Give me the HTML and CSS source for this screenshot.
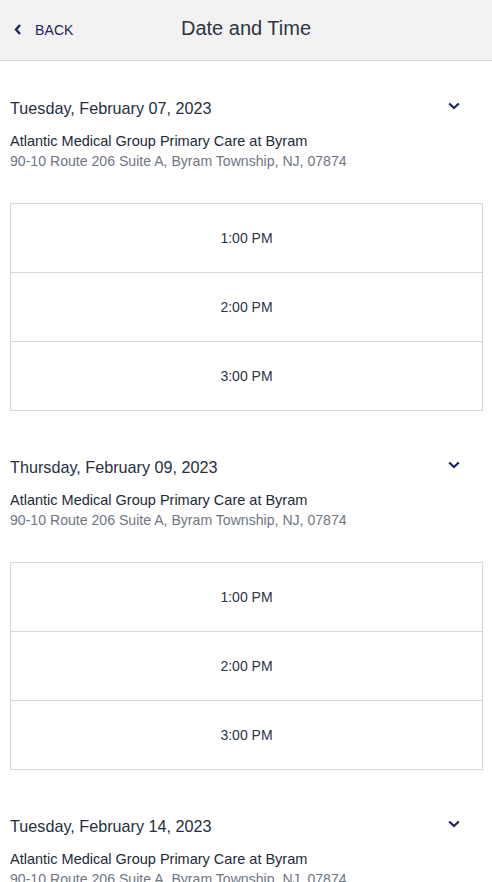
FILE: index.html
```html
<!DOCTYPE html>
<html>
<head>
<meta charset="utf-8">
<link rel="stylesheet" href="styles.css">
</head>
<body>
<header class="topbar">
  <a class="back">
    <svg class="back-icon" width="8" height="11" viewBox="0 0 8 11"><path d="M6 1 L2 5.5 L6 10" fill="none" stroke="#1d2558" stroke-width="2.4"/></svg>
    <span>BACK</span>
  </a>
  <h1 class="title">Date and Time</h1>
</header>
<main>
  <section class="day">
    <div class="day-head">
      <h2 class="date">Tuesday, February 07, 2023</h2>
      <svg class="chev" width="12" height="8" viewBox="0 0 12 8"><path d="M1.2 1.5 L6 6 L10.8 1.5" fill="none" stroke="#1d2558" stroke-width="2.2"/></svg>
    </div>
    <div class="clinic">Atlantic Medical Group Primary Care at Byram</div>
    <div class="addr">90-10 Route 206 Suite A, Byram Township, NJ, 07874</div>
    <div class="slots">
      <div class="slot">1:00 PM</div>
      <div class="slot">2:00 PM</div>
      <div class="slot">3:00 PM</div>
    </div>
  </section>
  <section class="day">
    <div class="day-head">
      <h2 class="date">Thursday, February 09, 2023</h2>
      <svg class="chev" width="12" height="8" viewBox="0 0 12 8"><path d="M1.2 1.5 L6 6 L10.8 1.5" fill="none" stroke="#1d2558" stroke-width="2.2"/></svg>
    </div>
    <div class="clinic">Atlantic Medical Group Primary Care at Byram</div>
    <div class="addr">90-10 Route 206 Suite A, Byram Township, NJ, 07874</div>
    <div class="slots">
      <div class="slot">1:00 PM</div>
      <div class="slot">2:00 PM</div>
      <div class="slot">3:00 PM</div>
    </div>
  </section>
  <section class="day">
    <div class="day-head">
      <h2 class="date">Tuesday, February 14, 2023</h2>
      <svg class="chev" width="12" height="8" viewBox="0 0 12 8"><path d="M1.2 1.5 L6 6 L10.8 1.5" fill="none" stroke="#1d2558" stroke-width="2.2"/></svg>
    </div>
    <div class="clinic">Atlantic Medical Group Primary Care at Byram</div>
    <div class="addr">90-10 Route 206 Suite A, Byram Township, NJ, 07874</div>
    <div class="slots">
      <div class="slot">1:00 PM</div>
      <div class="slot">2:00 PM</div>
      <div class="slot">3:00 PM</div>
    </div>
  </section>
</main>
</body>
</html>
```
FILE: styles.css
```css
* { box-sizing: border-box; }
html, body { margin: 0; padding: 0; background: #fff; }
body {
  font-family: "Liberation Sans", Arial, sans-serif;
  color: #2a3342;
  overflow: hidden;
  height: 882px;
}
.topbar {
  height: 61px;
  background: #f2f2f2;
  border-bottom: 1px solid #d2d5d8;
  position: relative;
  display: flex;
  align-items: center;
  justify-content: center;
}
.back {
  position: absolute;
  left: 14px;
  top: 0;
  height: 60px;
  display: flex;
  align-items: center;
  gap: 13px;
  color: #1d2558;
  font-size: 14px;
  letter-spacing: 0.1px;
}
.back-icon { display: block; margin-top: -1px; }
.title {
  margin: 0;
  font-size: 20px;
  font-weight: normal;
  color: #2d3543;
  margin-top: -3px;
}
.day {
  padding: 37px 9px 9px 10px;
}
.day-head {
  display: flex;
  justify-content: space-between;
  align-items: flex-start;
}
.date {
  margin: 0;
  font-size: 16.2px;
  line-height: 20px;
  font-weight: normal;
  color: #262f3e;
}
.chev { display: block; margin: 4px 23px 0 0; }
.clinic {
  margin-top: 13px;
  font-size: 14.5px;
  line-height: 20px;
  color: #222a38;
}
.addr {
  font-size: 14.1px;
  line-height: 20px;
  color: #6f7682;
}
.slots {
  margin-top: 32px;
  border: 1px solid #d3d8dc;
}
.slot {
  height: 69px;
  display: flex;
  align-items: center;
  justify-content: center;
  font-size: 14px;
  color: #2d3543;
  border-top: 1px solid #d3d8dc;
}
.slot:first-child { height: 68px; border-top: none; }
```
